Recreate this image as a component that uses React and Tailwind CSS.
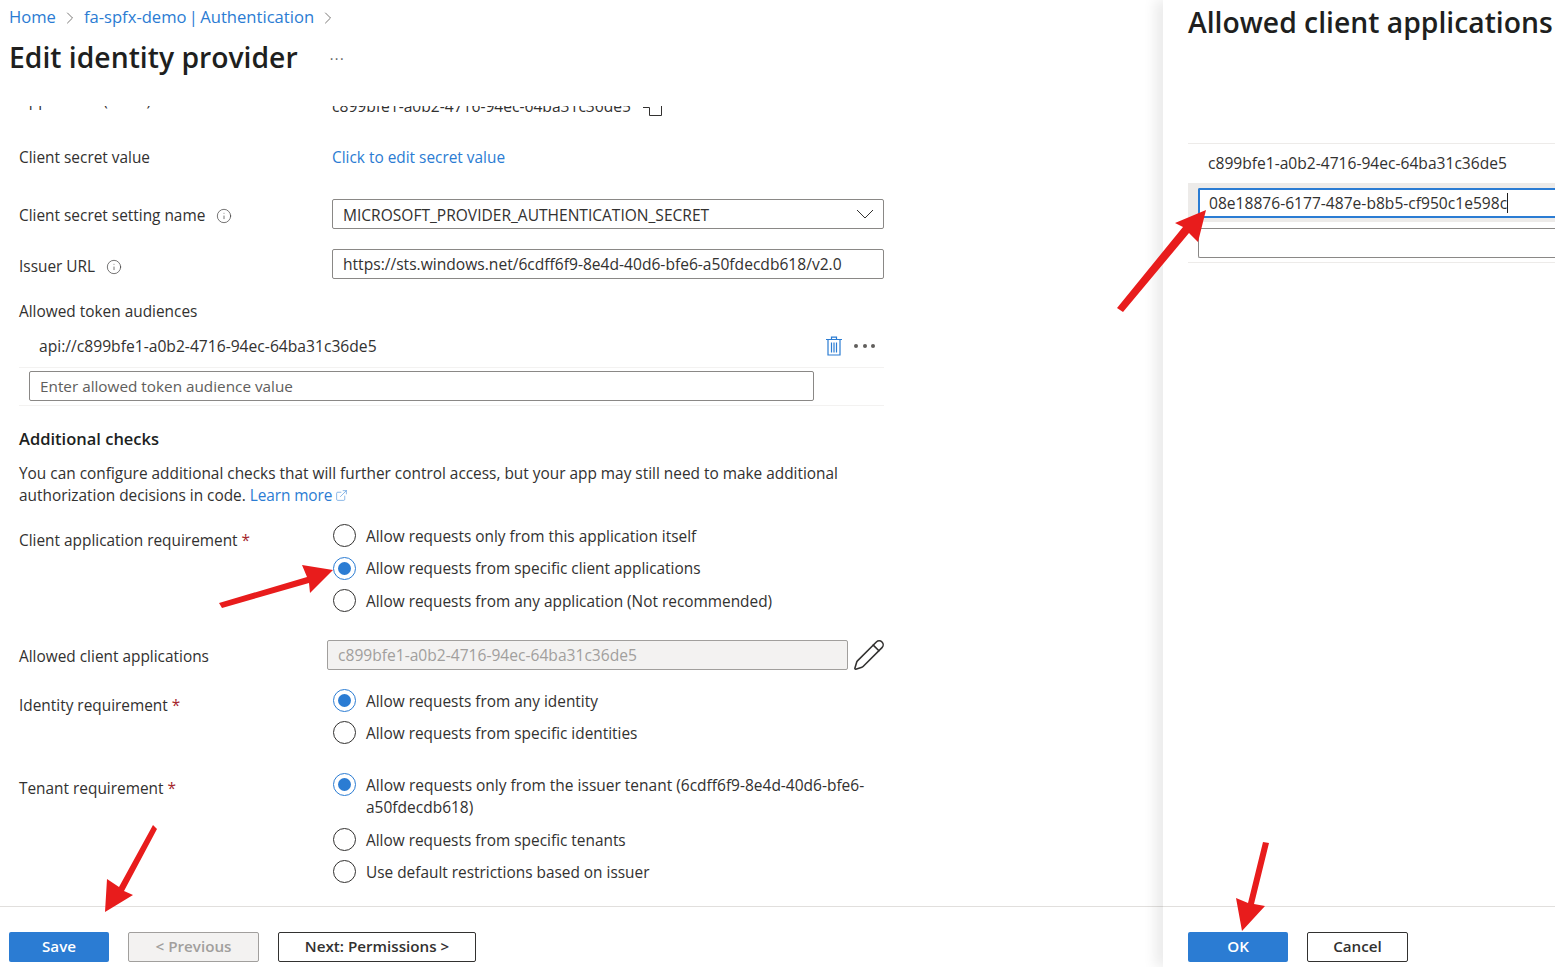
import { ChevronRight, Info, Pencil, ExternalLink } from 'lucide-react';

function Radio({ checked }) {
  if (checked) {
    return (
      <span className="w-[23px] h-[23px] shrink-0 rounded-full border border-[#2b7cd3] flex items-center justify-center">
        <span className="w-[13px] h-[13px] rounded-full bg-[#2b7cd3]"></span>
      </span>
    );
  }
  return <span className="w-[23px] h-[23px] shrink-0 rounded-full border border-[#323130]"></span>;
}

function RadioRow({ checked, children, className = '' }) {
  return (
    <div className={`flex items-center gap-[10px] h-[23px] ${className}`}>
      <Radio checked={checked} />
      <span className="leading-[22px] pt-[2px]">{children}</span>
    </div>
  );
}

function Label({ children, required, className = '' }) {
  return (
    <div className={`w-[313px] shrink-0 ${className}`}>
      {children}
      {required && <span className="text-[#a4262c] ml-1">*</span>}
    </div>
  );
}

function InfoIcon({ className = '' }) {
  return <Info size={16} strokeWidth={1} className={`inline-block text-[#323130] ${className}`} />;
}

function TrashIcon() {
  return (
    <svg width="18" height="20" viewBox="0 0 18 20" fill="none" stroke="#2b7cd3" strokeWidth="1.2">
      <path d="M1 3.5h16M6.5 3.5V1.2h5v2.3M3 3.5v15.5h12V3.5" />
      <path d="M6.5 6.5v10M9 6.5v10M11.5 6.5v10" />
    </svg>
  );
}

function Arrows() {
  return (
    <svg className="absolute inset-0 pointer-events-none" width="1555" height="967" viewBox="0 0 1555 967" fill="#e81c1c">
      <polygon points="219,603 307,577 302,565 333,570 310,593 309,583 222,608" />
      <polygon points="1117,308 1183,227 1175,223 1206,210 1198,242 1189,233 1123,312" />
      <polygon points="153,825 119,887 107,879 105,912 133,895 124,891 157,829" />
      <polygon points="1263,842 1248,903 1236,898 1242,931 1265,906 1254,904 1269,843" />
    </svg>
  );
}

export default function App() {
  return (
    <div className="relative w-[1555px] h-[967px] overflow-hidden flex bg-white text-[15.4px] text-[#323130] font-['Open_Sans',sans-serif]">
      <div className="w-[1163px] shrink-0 flex flex-col">
        <div className="h-[101px] shrink-0 pl-[9px]">
          <div className="flex items-center h-[35px] text-[16.6px] text-[#2b7cd3] [word-spacing:-2px]">
            <span>Home</span>
            <ChevronRight size={20} strokeWidth={1} className="text-[#605e5c] ml-[4px] mr-[4px]" />
            <span>fa-spfx-demo | Authentication</span>
            <ChevronRight size={20} strokeWidth={1} className="text-[#605e5c] ml-[4px]" />
          </div>
          <div className="flex items-center h-[44px]">
            <h1 className="text-[28.3px] font-semibold text-[#201f1e]">Edit identity provider</h1>
            <span className="ml-[32px] -mt-[6px] text-[#605e5c] text-[14px] tracking-[1.5px]">...</span>
          </div>
        </div>

        <div className="flex-1 overflow-hidden pl-[19px]">
          <div className="w-[865px]">
            <div className="h-[10px] mt-[5px] overflow-hidden flex">
              <Label className="-mt-[17px]">Application (client) ID</Label>
              <div className="flex -mt-[11px] text-[15.6px]">
                <span className="whitespace-nowrap">c899bfe1-a0b2-4716-94ec-64ba31c36de5</span>
                <svg className="ml-[12px] mt-[11px] shrink-0" width="20" height="12" viewBox="0 0 20 12" fill="none" stroke="#323130">
                  <path d="M0 1.5H6.5M6.5 1.5V9.5H18.5V0" />
                </svg>
              </div>
            </div>
            <div className="flex items-center h-[22px] mt-[31px]">
              <Label>Client secret value</Label>
              <span className="text-[#2b7cd3]">Click to edit secret value</span>
            </div>
            <div className="flex items-center h-[30px] mt-[30px]">
              <Label className="pt-[4px]">
                Client secret setting name
                <InfoIcon className="ml-[11px] -mt-[2px]" />
              </Label>
              <div className="w-[552px] h-[30px] border border-[#8a8886] rounded-[2px] pl-[10px] pr-[9px] pt-[3px] flex items-center justify-between text-[15.55px]">
                <span>MICROSOFT_PROVIDER_AUTHENTICATION_SECRET</span>
                <svg className="-mt-[3px]" width="18" height="10" viewBox="0 0 18 10" fill="none" stroke="#323130">
                  <path d="M1 1L9 9L17 1" />
                </svg>
              </div>
            </div>
            <div className="flex items-center h-[30px] mt-[20px]">
              <Label className="mt-[5px]">
                Issuer URL
                <InfoIcon className="ml-[11px] -mt-[2px]" />
              </Label>
              <div className="w-[552px] h-[30px] border border-[#8a8886] rounded-[2px] px-[10px] pt-[2px] flex items-center text-[15.6px]">
                https://sts.windows.net/6cdff6f9-8e4d-40d6-bfe6-a50fdecdb618/v2.0
              </div>
            </div>

            <div className="h-[22px] leading-[22px] mt-[22px]">Allowed token audiences</div>
            <div className="flex items-center justify-between h-[43px] mt-[2px] pl-[20px] border-b border-[#f3f2f1]">
              <span className="text-[15.65px] pt-[2px]">api://c899bfe1-a0b2-4716-94ec-64ba31c36de5</span>
              <div className="flex items-center gap-[11px] pr-[9px]">
                <TrashIcon />
                <span className="flex gap-[4.5px]">
                  <span className="w-[4px] h-[4px] rounded-full bg-[#605e5c]"></span>
                  <span className="w-[4px] h-[4px] rounded-full bg-[#605e5c]"></span>
                  <span className="w-[4px] h-[4px] rounded-full bg-[#605e5c]"></span>
                </span>
              </div>
            </div>
            <div className="h-[38px] pl-[10px] pt-[3px] border-b border-[#f3f2f1]">
              <div className="w-[785px] h-[30px] border border-[#8a8886] rounded-[2px] px-[10px] pt-[1px] flex items-center text-[15.3px] text-[#605e5c]">
                Enter allowed token audience value
              </div>
            </div>

            <h2 className="text-[16.5px] font-semibold text-[#201f1e] leading-[22px] mt-[22px]">Additional checks</h2>
            <p className="leading-[22px] mt-[13px] w-[850px]">
              You can configure additional checks that will further control access, but your app may still need to make additional authorization decisions in code.{' '}
              <span className="text-[#2b7cd3] tracking-[-0.1px]">Learn more</span>
              <ExternalLink size={13} strokeWidth={1} className="inline-block text-[#2b7cd3] ml-[3px] -mt-[2px]" />
            </p>

            <div className="flex mt-[17px]">
              <Label className="pt-[5px]" required>Client application requirement</Label>
              <div className="flex flex-col gap-[9.5px] pl-[1px]">
                <RadioRow>Allow requests only from this application itself</RadioRow>
                <RadioRow checked>Allow requests from specific client applications</RadioRow>
                <RadioRow>Allow requests from any application (Not recommended)</RadioRow>
              </div>
            </div>

            <div className="flex items-center h-[30px] mt-[28px]">
              <div className="w-[308px] shrink-0 pt-[4px]">Allowed client applications</div>
              <div className="w-[521px] shrink-0 h-[30px] border border-[#a19f9d] rounded-[2px] bg-[#f3f2f1] px-[10px] pt-[2px] flex items-center text-[#a19f9d] text-[15.6px]">
                c899bfe1-a0b2-4716-94ec-64ba31c36de5
              </div>
              <Pencil size={34} strokeWidth={1.1} className="ml-[4px] shrink-0 text-[#323130]" />
            </div>

            <div className="flex mt-[19px]">
              <Label className="pt-[5px]" required>Identity requirement</Label>
              <div className="flex flex-col gap-[9px] pl-[1px]">
                <RadioRow checked>Allow requests from any identity</RadioRow>
                <RadioRow>Allow requests from specific identities</RadioRow>
              </div>
            </div>

            <div className="flex mt-[29px]">
              <Label className="pt-[4px]" required>Tenant requirement</Label>
              <div className="pl-[1px] w-[545px]">
                <div className="flex gap-[10px]">
                  <Radio checked />
                  <span className="leading-[22px] pt-[1px] text-[15.5px]">Allow requests only from the issuer tenant (6cdff6f9-8e4d-40d6-bfe6-a50fdecdb618)</span>
                </div>
                <RadioRow className="mt-[10px]">Allow requests from specific tenants</RadioRow>
                <RadioRow className="mt-[9px]">Use default restrictions based on issuer</RadioRow>
              </div>
            </div>
          </div>
        </div>

        <div className="h-[61px] shrink-0 border-t border-[#e1dfdd] pl-[9px] pt-[25px] flex gap-[19px] text-[15.2px] font-semibold">
          <button className="w-[100px] h-[30px] pb-[2px] rounded-[2px] bg-[#2b7cd3] text-white">Save</button>
          <button className="w-[131px] h-[30px] pb-[2px] rounded-[2px] border border-[#a19f9d] bg-[#f3f2f1] text-[#a19f9d]">&lt; Previous</button>
          <button className="w-[198px] h-[30px] pb-[2px] rounded-[2px] border border-[#323130]">Next: Permissions &gt;</button>
        </div>
      </div>

      <div className="w-[392px] shrink-0 flex flex-col shadow-[-8px_0_12px_rgba(0,0,0,0.08)]">
        <div className="flex-1 overflow-hidden pl-[25px]">
          <h2 className="text-[28.3px] font-semibold text-[#201f1e] whitespace-nowrap h-[143px] pt-[1px]">Allowed client applications</h2>
          <div className="border-t border-[#edebe9] h-[40px] pl-[20px] flex items-center text-[15.6px]">c899bfe1-a0b2-4716-94ec-64ba31c36de5</div>
          <div className="h-[39px] bg-[#edebe9] pl-[10px] pt-[5px]">
            <div className="h-[30px] border-2 border-r-0 border-[#2b7cd3] rounded-l-[2px] bg-white pl-[9px] flex items-center text-[15.6px]">
              <span className="pt-[2px]">08e18876-6177-487e-b8b5-cf950c1e598c</span>
              <span className="w-px h-[20px] bg-[#201f1e]"></span>
            </div>
          </div>
          <div className="pl-[10px] pt-[6px] pb-[4px] border-b border-[#edebe9]">
            <div className="h-[30px] border border-r-0 border-[#8a8886] rounded-l-[2px]"></div>
          </div>
        </div>
        <div className="h-[61px] shrink-0 border-t border-[#e1dfdd] pl-[25px] pt-[25px] flex gap-[19px] text-[15.2px] font-semibold">
          <button className="w-[100px] h-[30px] pb-[2px] rounded-[2px] bg-[#2b7cd3] text-white">OK</button>
          <button className="w-[101px] h-[30px] pb-[2px] rounded-[2px] border border-[#323130]">Cancel</button>
        </div>
      </div>

      <Arrows />
    </div>
  );
}
